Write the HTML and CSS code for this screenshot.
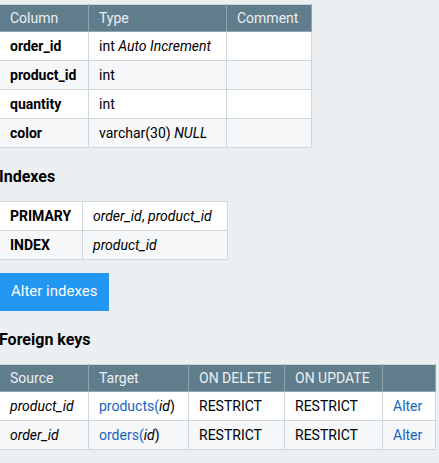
FILE: index.html
```html
<!DOCTYPE html>
<html>
<head>
<meta charset="utf-8">
<link rel="stylesheet" href="styles.css">
</head>
<body>
<div class="page">
  <table class="grid cols">
    <thead>
      <tr><th>Column</th><th>Type</th><th>Comment</th></tr>
    </thead>
    <tbody>
      <tr><th>order_id</th><td>int <i>Auto Increment</i></td><td></td></tr>
      <tr><th>product_id</th><td>int</td><td></td></tr>
      <tr><th>quantity</th><td>int</td><td></td></tr>
      <tr><th>color</th><td>varchar(30) <i>NULL</i></td><td></td></tr>
    </tbody>
  </table>

  <h3>Indexes</h3>
  <table class="grid idx">
    <tbody>
      <tr><th>PRIMARY</th><td><i>order_id</i>, <i>product_id</i></td></tr>
      <tr><th>INDEX</th><td><i>product_id</i></td></tr>
    </tbody>
  </table>

  <div class="btnrow"><a class="btn" href="#">Alter indexes</a></div>

  <h3>Foreign keys</h3>
  <table class="grid fk">
    <thead>
      <tr><th>Source</th><th>Target</th><th>ON DELETE</th><th>ON UPDATE</th><th></th></tr>
    </thead>
    <tbody>
      <tr><td><i>product_id</i></td><td><a href="#">products(</a><i>id</i>)</td><td>RESTRICT</td><td>RESTRICT</td><td><a href="#">Alter</a></td></tr>
      <tr><td><i>order_id</i></td><td><a href="#">orders(</a><i>id</i>)</td><td>RESTRICT</td><td>RESTRICT</td><td><a href="#">Alter</a></td></tr>
    </tbody>
  </table>
</div>
</body>
</html>
```

FILE: styles.css
```css
html, body {
  margin: 0;
  padding: 0;
  background: #eceff1;
}
body {
  font-family: Roboto, "Liberation Sans", sans-serif;
  font-size: 14px;
  color: #000;
}
.page {
  margin-left: -1px;
  padding-top: 4px;
}
.grid {
  border-collapse: collapse;
  border: 1px solid #90a4ae;
  background: #fff;
}
.grid th, .grid td {
  border: 1px solid #cfd8dc;
  padding: 6px 10px;
  line-height: 16px;
  text-align: left;
  white-space: nowrap;
  vertical-align: middle;
}
.grid tbody th {
  font-weight: bold;
}
.grid td {
  font-weight: normal;
}
.grid thead th {
  background: #607d8b;
  color: #eceff1;
  font-weight: normal;
  border-color: #90a4ae;
  border-top-color: #cfd8dc;
  padding: 5px 10px 5px;
}
.grid tbody tr:nth-child(even) {
  background: #f5f7f8;
}
.grid a {
  color: #1565c0;
  text-decoration: none;
}
.cols th:nth-child(1) { width: 68px; }
.cols th:nth-child(3) { width: 64px; }
.cols td:nth-child(2) { width: 117px; }
.idx th { width: 62px; }
.idx td { width: 124px; }
.fk td:nth-child(1) { width: 68px; }
.fk td:nth-child(2) { width: 79px; }
.fk td:nth-child(3) { width: 75px; }
.fk td:nth-child(4) { width: 77px; }
.fk td:nth-child(5) { width: 32px; }
h3 {
  margin: 19px 0 14px;
  font-size: 16px;
  line-height: 20px;
  font-weight: bold;
}
.btnrow {
  display: flex;
  margin: 13px 0 18px;
}
.btn {
  display: block;
  background: #2196f3;
  color: #fff;
  text-decoration: none;
  font-size: 15px;
  line-height: 19px;
  padding: 9px 10px 10px 11px;
  margin-left: 1px;
  width: 88px;
}
```
